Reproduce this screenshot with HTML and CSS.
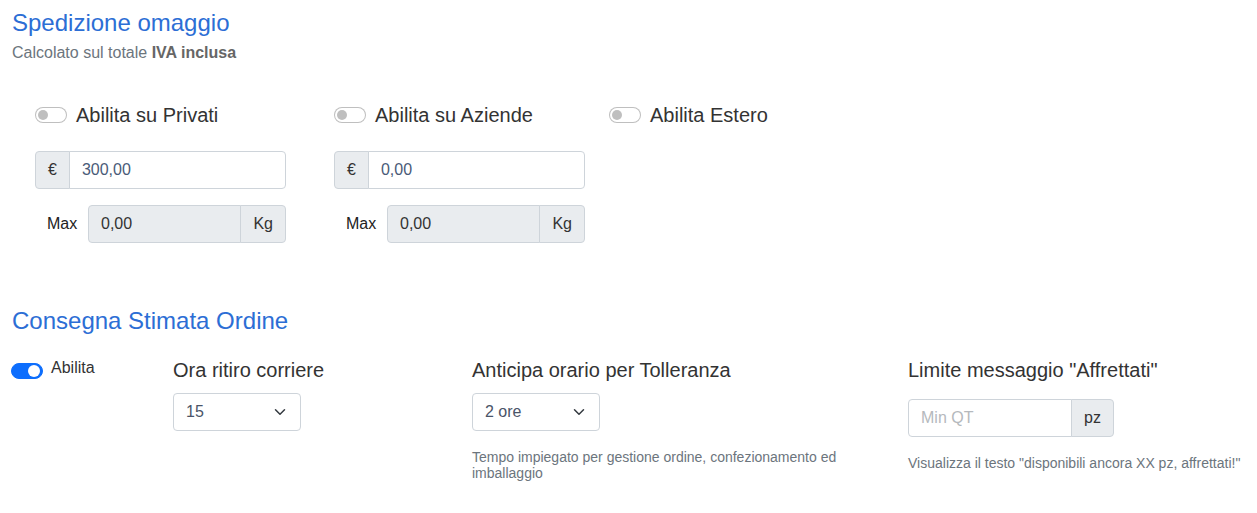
FILE: index.html
```html
<!DOCTYPE html>
<html lang="it">

<head>
    <meta charset="UTF-8">
    <meta name="viewport" content="width=device-width, initial-scale=1.0">
    <title>Spedizione omaggio</title>
    <link rel="stylesheet" href="styles.css">
</head>

<body>
    <div class="page">
        <h3 class="title">Spedizione omaggio</h3>
        <p class="subtitle">Calcolato sul totale <b>IVA inclusa</b></p>

        <div class="free-row">
            <div class="free-col col-privati">
                <label class="switch-line">
                    <span class="switch"><span class="knob"></span></span>
                    <span class="switch-label">Abilita su Privati</span>
                </label>
                <div class="input-group">
                    <span class="addon">€</span>
                    <input class="field" type="text" value="300,00">
                </div>
                <div class="max-line">
                    <span class="max-label">Max</span>
                    <div class="input-group">
                        <input class="field" type="text" value="0,00" disabled>
                        <span class="addon">Kg</span>
                    </div>
                </div>
            </div>

            <div class="free-col col-aziende">
                <label class="switch-line">
                    <span class="switch"><span class="knob"></span></span>
                    <span class="switch-label">Abilita su Aziende</span>
                </label>
                <div class="input-group">
                    <span class="addon">€</span>
                    <input class="field" type="text" value="0,00">
                </div>
                <div class="max-line">
                    <span class="max-label">Max</span>
                    <div class="input-group">
                        <input class="field" type="text" value="0,00" disabled>
                        <span class="addon">Kg</span>
                    </div>
                </div>
            </div>

            <div class="free-col">
                <label class="switch-line">
                    <span class="switch"><span class="knob"></span></span>
                    <span class="switch-label">Abilita Estero</span>
                </label>
            </div>
        </div>

        <h3 class="title title-second">Consegna Stimata Ordine</h3>

        <div class="delivery-row">
            <div class="delivery-col col-enable">
                <label class="check-line">
                    <span class="switch on"><span class="knob"></span></span>
                    <span class="check-label">Abilita</span>
                </label>
            </div>

            <div class="delivery-col col-ritiro">
                <div class="field-title">Ora ritiro corriere</div>
                <div class="select">
                    <span>15</span>
                    <svg width="16" height="12" viewBox="0 0 16 16"><path d="M2 5l6 6 6-6" fill="none" stroke="#343a40" stroke-width="2" stroke-linecap="round" stroke-linejoin="round"/></svg>
                </div>
            </div>

            <div class="delivery-col col-anticipa">
                <div class="field-title">Anticipa orario per Tolleranza</div>
                <div class="select">
                    <span>2 ore</span>
                    <svg width="16" height="12" viewBox="0 0 16 16"><path d="M2 5l6 6 6-6" fill="none" stroke="#343a40" stroke-width="2" stroke-linecap="round" stroke-linejoin="round"/></svg>
                </div>
                <div class="help">Tempo impiegato per gestione ordine, confezionamento ed imballaggio</div>
            </div>

            <div class="delivery-col col-limite">
                <div class="field-title">Limite messaggio "Affrettati"</div>
                <div class="input-group qt-group">
                    <input class="field" type="text" placeholder="Min QT">
                    <span class="addon">pz</span>
                </div>
                <div class="help">Visualizza il testo "disponibili ancora XX pz, affrettati!"</div>
            </div>
        </div>
    </div>
</body>

</html>
```

FILE: styles.css
```css
body {
    background-color: #fff;
    color: #333;
    font-family: "Liberation Sans", Arial, sans-serif;
    font-size: 16px;
    margin: 0;
    padding: 0;
}

.page {
    padding: 0 12px;
}

.title {
    color: #2c6ed5;
    font-size: 24px;
    font-weight: normal;
    line-height: 29px;
    margin: 8px 0 0;
}

.title-second {
    margin-top: 63px;
}

.subtitle {
    color: #6c757d;
    font-size: 16px;
    line-height: 24px;
    margin: 4px 0 0;
}

.subtitle b {
    color: #666;
}

/* switches */
.switch {
    width: 32px;
    height: 16px;
    box-sizing: border-box;
    border: 1px solid rgba(0, 0, 0, .25);
    border-radius: 8px;
    background-color: #fff;
    display: flex;
    align-items: center;
    padding: 0 2px;
    flex-shrink: 0;
}

.knob {
    width: 10px;
    height: 10px;
    border-radius: 50%;
    background-color: #bfbfbf;
}

.switch.on {
    background-color: #0d6efd;
    border-color: #0d6efd;
    justify-content: flex-end;
}

.switch.on .knob {
    background-color: #fff;
    width: 12px;
    height: 12px;
}

/* free shipping */
.free-row {
    display: flex;
    margin-top: 38px;
    padding-left: 23px;
}

.col-privati {
    width: 299px;
}

.col-aziende {
    width: 275px;
}

.switch-line {
    display: flex;
    align-items: center;
    gap: 9px;
    height: 24px;
}

.switch-label {
    font-size: 20px;
    line-height: 24px;
}

.input-group {
    display: flex;
    width: 251px;
    height: 38px;
    margin-top: 24px;
}

.addon {
    background-color: #e9ecef;
    border: 1px solid #ced4da;
    padding: 6px 12px;
    line-height: 24px;
    color: #333;
}

.input-group .addon:first-child {
    border-radius: 4px 0 0 4px;
}

.input-group .addon:last-child {
    border-radius: 0 4px 4px 0;
}

.field {
    flex: 1;
    min-width: 0;
    box-sizing: border-box;
    border: 1px solid #ced4da;
    border-radius: 0 4px 4px 0;
    margin-left: -1px;
    padding: 6px 12px;
    font: inherit;
    line-height: 24px;
    color: #4a5b78;
    background-color: #fff;
}

.field:first-child {
    margin-left: 0;
    margin-right: -1px;
    border-radius: 4px 0 0 4px;
}

.field:disabled {
    background-color: #e9ecef;
    color: #333;
}

.field::placeholder {
    color: #b5b9bd;
}

.max-line {
    display: flex;
    align-items: center;
    margin-top: 16px;
    padding-left: 12px;
}

.max-line .max-label {
    width: 41px;
    color: #222;
}

.max-line .input-group {
    margin-top: 0;
    width: 198px;
}

/* estimated delivery */
.delivery-row {
    display: flex;
    align-items: flex-start;
    margin-top: 21px;
}

.col-enable {
    width: 162px;
    margin-left: -1px;
}

.col-ritiro {
    width: 299px;
}

.col-anticipa {
    width: 412px;
    padding-right: 24px;
}

.check-line {
    display: flex;
    align-items: flex-start;
    gap: 8px;
}

.check-line .switch {
    margin-top: 7px;
}

.check-label {
    line-height: 24px;
}

.field-title {
    font-size: 20px;
    line-height: 24px;
    margin-top: 2px;
}

.select {
    display: flex;
    align-items: center;
    justify-content: space-between;
    width: 128px;
    height: 38px;
    box-sizing: border-box;
    margin-top: 11px;
    padding: 6px 12px;
    border: 1px solid #ced4da;
    border-radius: 4px;
    color: #4a5468;
}

.qt-group {
    width: 206px;
    margin-top: 17px;
}

.help {
    color: #6c757d;
    font-size: 14px;
    line-height: 16px;
    margin-top: 18px;
}
```
